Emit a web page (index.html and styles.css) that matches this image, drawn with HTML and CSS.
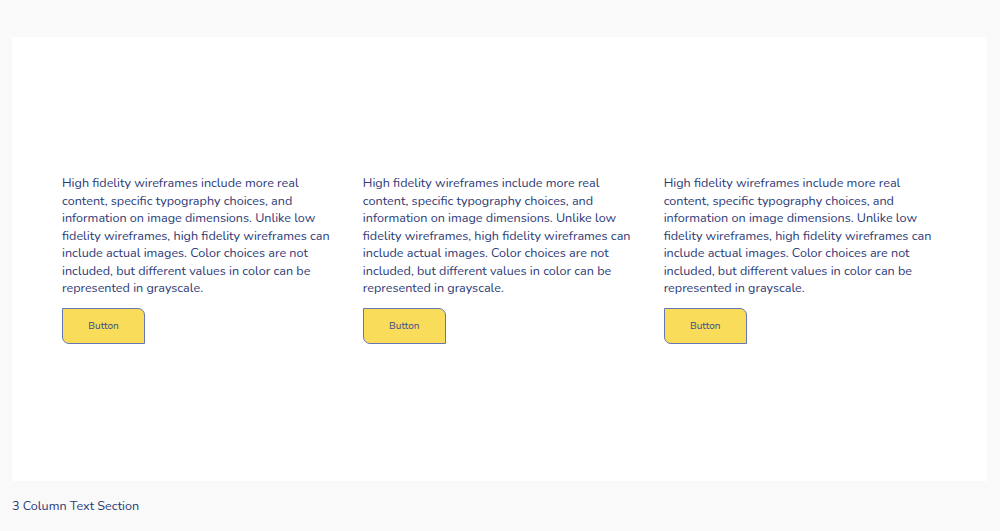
FILE: index.html
```html
<!DOCTYPE html>
<html lang="en">
<head>
    <meta charset="UTF-8">
    <title>3 Column Text Section</title>
    <link rel="stylesheet" href="styles.css">
</head>
<body>

    <div class="frame">
        <div class="columns">
            <div class="column">
                <p>High fidelity wireframes include more real content, specific typography choices, and information on image dimensions. Unlike low fidelity wireframes, high fidelity wireframes can include actual images. Color choices are not included, but different values in color can be represented in grayscale.</p>
                <button class="btn">Button</button>
            </div>
            <div class="column">
                <p>High fidelity wireframes include more real content, specific typography choices, and information on image dimensions. Unlike low fidelity wireframes, high fidelity wireframes can include actual images. Color choices are not included, but different values in color can be represented in grayscale.</p>
                <button class="btn">Button</button>
            </div>
            <div class="column">
                <p>High fidelity wireframes include more real content, specific typography choices, and information on image dimensions. Unlike low fidelity wireframes, high fidelity wireframes can include actual images. Color choices are not included, but different values in color can be represented in grayscale.</p>
                <button class="btn">Button</button>
            </div>
        </div>
    </div>

    <div class="caption">3 Column Text Section</div>

</body>
</html>
```

FILE: styles.css
```css
body {
    font-family: Nunito, Lato, 'Open Sans', sans-serif;
    background: #f9f9f9;
    color: #2d3a76;
    margin: 0;
    padding: 37px 13px 0 12px;
}
.frame {
    background: #fff;
    height: 444px;
    display: flex;
    align-items: center;
    padding: 0 50px;
}
.columns {
    display: flex;
    gap: 27.5px;
    width: 100%;
}
.column {
    width: 274px;
}
.column p {
    font-size: 12.6px;
    line-height: 17.5px;
    margin: 0 0 11px 0;
}
.btn {
    width: 83px;
    height: 36px;
    background: #f8dc5a;
    color: #3a4a8a;
    font-family: inherit;
    font-size: 10px;
    border: 1px solid #6476b4;
    border-radius: 0 7px 0 7px;
    cursor: pointer;
}
.caption {
    font-size: 12.6px;
    margin-top: 16px;
}
```
